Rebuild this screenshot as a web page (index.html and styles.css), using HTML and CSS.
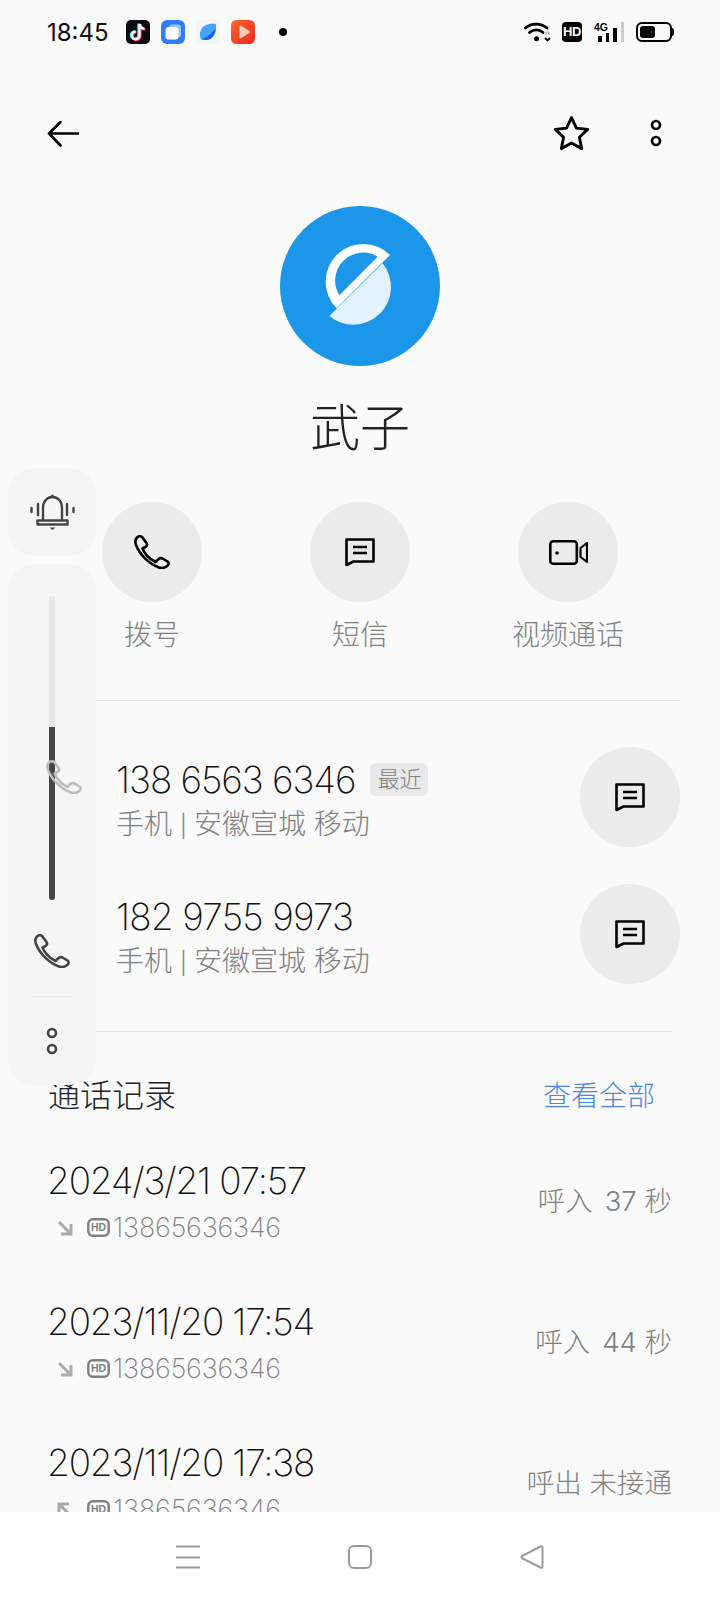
FILE: index.html
```html
<!DOCTYPE html>
<html lang="zh">
<head>
<meta charset="utf-8">
<title>武子</title>
<link rel="stylesheet" href="styles.css">
</head>
<body>
<div class="screen">
  <div class="main">
    <header class="status">
      <span class="time">18:45</span>
      <div class="apps">
        <svg class="app" viewBox="0 0 24 24"><rect width="24" height="24" rx="5" fill="#0a0a14"/><path d="M13.500 4v11.500a3.800 3.800 0 1 1-3.800-3.800M13.500 4c.4 2.900 2.200 4.600 5 4.900" fill="none" stroke="#25f4ee" stroke-width="2.800" transform="translate(-.8 -.4)"/><path d="M13.500 4v11.500a3.800 3.800 0 1 1-3.800-3.800M13.500 4c.4 2.900 2.200 4.600 5 4.900" fill="none" stroke="#fe2c55" stroke-width="2.800" transform="translate(.8 .5)"/><path d="M13.500 4v11.500a3.800 3.800 0 1 1-3.800-3.800M13.500 4c.4 2.900 2.200 4.600 5 4.900" fill="none" stroke="#fff" stroke-width="2.300"/></svg>
        <svg class="app" viewBox="0 0 24 24"><rect width="24" height="24" rx="6" fill="#2f7df6"/><rect x="8" y="4.500" width="12" height="13" rx="3" fill="#9cc4fb"/><rect x="4.500" y="7" width="13" height="12.500" rx="3" fill="#fff"/></svg>
        <svg class="app" viewBox="0 0 24 24"><rect width="24" height="24" rx="6" fill="#f3f4f6"/><path d="M5 19C3 17 3.500 9 8 6C12 3.500 17 3.500 20 4C20.500 9 19.500 14 16 17.500C13 20.500 8 20.500 5 19Z" fill="#45a5fb"/><path d="M5 19C10 18 15.500 14 19.500 8.500C20 12 18.500 15 16 17.500C13 20.500 8 20.500 5 19Z" fill="#1d62e6"/></svg>
        <svg class="app" viewBox="0 0 24 24"><defs><linearGradient id="rg" x1="0" y1="0" x2="1" y2="1"><stop offset="0" stop-color="#f8672e"/><stop offset="1" stop-color="#ee2a1c"/></linearGradient></defs><rect width="24" height="24" rx="5.500" fill="url(#rg)"/><path d="M8.500 6.500Q8.500 5 10 5.800L18.500 11Q19.500 12 18.500 13L10 18.200Q8.500 19 8.500 17.500Z" fill="#ffc9bb"/></svg>
        <span class="notif-dot"></span>
      </div>
      <div class="sys">
        <svg class="ic-wifi" viewBox="0 0 28 20"><g fill="none" stroke="#000" stroke-width="2.800" stroke-linecap="round"><path d="M1.500 6C7 .8 17 .8 23 6"/><path d="M5.500 10.500c4-3.500 9.500-3.500 13.500 0"/></g><circle cx="12.500" cy="16.800" r="2.500"/><path d="M21 12.500l2.500-2.500 2.500 2.500" fill="none" stroke="#bbb" stroke-width="1.800"/><path d="M21 16l2.500 2.500 2.500-2.500" fill="none" stroke="#000" stroke-width="1.800"/></svg>
        <span class="hd">HD</span>
        <div class="net">
          <span class="net-label">4G</span>
          <div class="bars"><i class="b1"></i><i class="b2"></i><i class="b3"></i><i class="b4"></i></div>
        </div>
        <div class="battery"><i class="level"></i></div>
        <i class="tip"></i>
      </div>
    </header>

    <nav class="toolbar">
      <svg class="ic-back" viewBox="0 0 32 26"><path d="M32 12.500H2M13.500 1L2 12.500 13.500 24.500" fill="none" stroke="#000" stroke-width="2.600" stroke-linecap="round" stroke-linejoin="round"/></svg>
      <div class="tool-right">
        <svg class="ic-star" viewBox="0 0 36 35"><path d="M18 2.500l4.800 10.200 11 1.300-8.100 7.600 2.200 11.100L18 27.200 8.100 32.700l2.200-11.100-8.100-7.600 11-1.300z" fill="none" stroke="#000" stroke-width="2.800" stroke-linejoin="round"/></svg>
        <svg class="ic-dots" viewBox="0 0 12 28"><circle cx="6" cy="6" r="4" fill="none" stroke="#000" stroke-width="2.600"/><circle cx="6" cy="22" r="4" fill="none" stroke="#000" stroke-width="2.600"/></svg>
      </div>
    </nav>

    <div class="avatar-wrap">
      <svg class="avatar" viewBox="60 48 480 480">
        <circle cx="300" cy="288" r="240" fill="#1c96e8"/>
        <path d="M390 195A113 113 0 0 0 230 355ZM353 200A84 84 0 0 0 238 316Z" fill="#fff" fill-rule="evenodd"/>
        <path d="M368 220A113 113 0 0 1 208 378Z" fill="#e1f2fe"/>
      </svg>
    </div>
    <h1 class="name">武子</h1>

    <section class="actions">
      <div class="action">
        <span class="circle"><svg class="ic-phone" viewBox="0 0 36 34"><use href="#phone"/></svg></span>
        <span class="action-label">拨号</span>
      </div>
      <div class="action">
        <span class="circle"><svg class="ic-msg" viewBox="0 0 30 29"><use href="#msg"/></svg></span>
        <span class="action-label">短信</span>
      </div>
      <div class="action">
        <span class="circle"><svg class="ic-video" viewBox="0 0 39 25"><rect x="1.300" y="1.300" width="26.500" height="22.400" rx="3" fill="none" stroke="#000" stroke-width="2.600"/><circle cx="8" cy="13" r="1.800"/><path d="M38 3L31.500 8V17L38 22Z" fill="none" stroke="#000" stroke-width="2.200" stroke-linejoin="round"/></svg></span>
        <span class="action-label">视频通话</span>
      </div>
    </section>

    <hr class="rule rule-a">

    <section class="phones">
      <div class="phone-row">
        <div class="phone-text">
          <div class="phone-line"><span class="number n1">138 6563 6346</span><span class="badge">最近</span></div>
          <div class="phone-sub">手机<span class="sep">|</span>安徽宣城 移动</div>
        </div>
        <span class="circle"><svg class="ic-msg" viewBox="0 0 30 29"><use href="#msg"/></svg></span>
      </div>
      <div class="phone-row">
        <div class="phone-text">
          <div class="phone-line"><span class="number n2">182 9755 9973</span></div>
          <div class="phone-sub">手机<span class="sep">|</span>安徽宣城 移动</div>
        </div>
        <span class="circle"><svg class="ic-msg" viewBox="0 0 30 29"><use href="#msg"/></svg></span>
      </div>
    </section>

    <hr class="rule rule-b">

    <div class="log-head">
      <span class="log-title">通话记录</span>
      <span class="log-all">查看全部</span>
    </div>

    <section class="logs">
      <div class="log">
        <div>
          <div class="log-date">2024/3/21 07:57</div>
          <div class="log-sub"><svg class="ic-dir" viewBox="0 0 16 16"><use href="#arrow-in"/></svg><svg class="ic-hd" viewBox="0 0 23 19"><use href="#hd"/><text x="11.500" y="13.200" class="hd-text">HD</text></svg><span class="log-num">13865636346</span></div>
        </div>
        <span class="log-kind">呼入<span class="kind-val">37 秒</span></span>
      </div>
      <div class="log">
        <div>
          <div class="log-date">2023/11/20 17:54</div>
          <div class="log-sub"><svg class="ic-dir" viewBox="0 0 16 16"><use href="#arrow-in"/></svg><svg class="ic-hd" viewBox="0 0 23 19"><use href="#hd"/><text x="11.500" y="13.200" class="hd-text">HD</text></svg><span class="log-num">13865636346</span></div>
        </div>
        <span class="log-kind">呼入<span class="kind-val">44 秒</span></span>
      </div>
      <div class="log">
        <div>
          <div class="log-date">2023/11/20 17:38</div>
          <div class="log-sub"><svg class="ic-dir" viewBox="0 0 16 16"><use href="#arrow-out"/></svg><svg class="ic-hd" viewBox="0 0 23 19"><use href="#hd"/><text x="11.500" y="13.200" class="hd-text">HD</text></svg><span class="log-num">13865636346</span></div>
        </div>
        <span class="log-kind">呼出 未接通</span>
      </div>
    </section>
  </div>

  <footer class="navbar">
    <svg class="nav-ic" viewBox="0 0 24 24"><path d="M0 1.500H24M0 12.500H24M0 22.500H24" stroke="#9a9a9a" stroke-width="2"/></svg>
    <svg class="nav-ic" viewBox="0 0 24 24"><rect x="1" y="1" width="22" height="22" rx="5" fill="none" stroke="#9a9a9a" stroke-width="2"/></svg>
    <svg class="nav-ic" viewBox="0 0 24 24"><path d="M22.500 2.500V21.500Q22.500 23.500 20.500 22.500L2 13.200Q1 12 2 11L20.500 1.500Q22.500 .8 22.500 2.500Z" fill="none" stroke="#9a9a9a" stroke-width="2"/></svg>
  </footer>

  <aside class="float">
    <div class="panel panel-bell">
      <svg class="ic-bell" viewBox="0 0 47 36"><g fill="none" stroke="#444" stroke-width="2.400" stroke-linejoin="round" stroke-linecap="round"><path d="M14 26V14C14 7.500 18 3 23.500 3S33 7.500 33 14V26"/><path d="M8.500 26.500H38.500V30.500H8.500Z"/><path d="M9 10V21M38 10V21"/><path d="M2.500 14V18M44.500 14V18"/></g><path d="M20.500 33.500h6l-3 2.500z" fill="#444"/><circle cx="23.500" cy="2" r="1.500" fill="#444"/></svg>
    </div>
    <div class="panel panel-vol">
      <div class="track"><div class="track-fill"></div></div>
      <svg class="ic-phone ghost" viewBox="0 0 36 34"><use href="#phone"/></svg>
      <svg class="ic-phone dark" viewBox="0 0 36 34"><use href="#phone"/></svg>
      <hr class="panel-rule">
      <svg class="ic-dots dark" viewBox="0 0 12 28"><circle cx="6" cy="6" r="4" fill="none" stroke="currentColor" stroke-width="2.600"/><circle cx="6" cy="22" r="4" fill="none" stroke="currentColor" stroke-width="2.600"/></svg>
    </div>
  </aside>

  <svg class="defs" aria-hidden="true">
    <defs>
      <path id="phone" d="M3 2.500C5 .8 7 1 8.500 2.500L12.500 8C13.500 9.500 13 11 11.500 12L8.500 13.500C10.500 18.500 15.500 24 21.500 27L24 24.500C25.500 23 27 22.800 28.500 23.500L33.500 26.500C35 27.500 35 29.500 33.500 30.800C31 33 28 33.500 25 32.500C15 29 6 20 2 10C1 7 1 4.500 3 2.500Z" fill="none" stroke="currentColor" stroke-width="2.600" stroke-linejoin="round"/>
      <g id="msg" fill="none" stroke="currentColor" stroke-width="2.600"><path d="M1.500 1.500H28.500V23.500H8.500L1.500 27Z" stroke-linejoin="round"/><path d="M8 9H22M8 15H22"/></g>
      <path id="arrow-in" d="M2 2L14 14M14 4V14H4" fill="none" stroke="#aaa" stroke-width="3"/>
      <path id="arrow-out" d="M14 14L2 2M2 12V2H12" fill="none" stroke="#aaa" stroke-width="3"/>
      <rect id="hd" x="1.300" y="1.300" width="20.400" height="16.400" rx="4.500" fill="none" stroke="#808080" stroke-width="2.400"/>
    </defs>
  </svg>
</div>
</body>
</html>
```
FILE: styles.css
```css
* { box-sizing: border-box; }
html, body { margin: 0; padding: 0; }
body {
  background: #fafafa;
  font-family: "Inter", "Noto Sans CJK SC", sans-serif;
  font-weight: 300;
}
.screen {
  width: 720px;
  height: 1600px;
  display: flex;
  flex-direction: column;
  position: relative;
  overflow: hidden;
  background: #fafafa;
}
.main { flex: 1; min-height: 0; overflow: hidden; }
.defs { position: absolute; width: 0; height: 0; }

/* status bar */
.status {
  height: 64px;
  padding: 0 46px 0 47px;
  display: flex;
  align-items: center;
}
.time { font-size: 24px; width: 79px; color: #111; font-weight: 400; }
.apps { display: flex; align-items: center; gap: 11px; }
.app { width: 24px; height: 24px; display: block; }
.notif-dot { width: 8px; height: 8px; border-radius: 50%; background: #000; margin-left: 13px; }
.sys { margin-left: auto; display: flex; align-items: center; }
.ic-wifi { width: 28px; height: 20px; }
.hd {
  width: 20px; height: 20px; margin-left: 10px;
  background: #000; color: #fff; border-radius: 4px;
  font: 700 13px/20px "Liberation Sans", sans-serif;
  text-align: center; letter-spacing: -.5px;
}
.net { position: relative; width: 30px; height: 20px; margin-left: 12px; }
.net-label {
  position: absolute; left: 0; top: 0;
  font: 700 10.500px/11px "Liberation Sans", sans-serif; color: #000;
}
.bars { position: absolute; left: 4px; bottom: 0; display: flex; align-items: flex-end; gap: 4px; }
.bars i { width: 3.500px; background: #000; display: block; }
.b1 { height: 6px; } .b2 { height: 9px; } .b3 { height: 14px; }
.bars .b4 { height: 20px; background: #ccc; }
.battery {
  width: 36px; height: 20px; margin-left: 12px;
  border: 2px solid #000; border-radius: 6px; padding: 2px;
}
.level { display: block; width: 15px; height: 12px; background: #000; border-radius: 3px; }
.tip { width: 2px; height: 8px; background: #000; border-radius: 0 2px 2px 0; }

/* toolbar */
.toolbar {
  height: 138px;
  padding: 0 0 0 47px;
  display: flex;
  align-items: center;
  justify-content: space-between;
}
.ic-back { width: 32px; height: 26px; margin-top: 2px; }
.tool-right { display: flex; align-items: center; gap: 60px; padding-right: 58px; }
.ic-star { width: 37px; height: 36px; }
.ic-dots { width: 12px; height: 28px; }

/* avatar & name */
.avatar-wrap { display: flex; justify-content: center; margin-top: 4px; }
.avatar { width: 160px; height: 160px; display: block; }
.name {
  margin: 32px 0 0;
  text-align: center;
  font-size: 50px;
  line-height: 60px;
  font-weight: 300;
  color: #222;
}

/* action buttons */
.actions {
  margin-top: 44px;
  padding: 0 48px;
  display: grid;
  grid-template-columns: repeat(3, 1fr);
}
.action { display: flex; flex-direction: column; align-items: center; gap: 13px; }
.circle {
  width: 100px; height: 100px;
  border-radius: 50%;
  background: #ebebeb;
  display: flex; align-items: center; justify-content: center;
  color: #000;
  flex: none;
}
.ic-phone { width: 36px; height: 34px; }
.ic-msg { width: 30px; height: 29px; }
.ic-video { width: 39px; height: 25px; }
.action-label { font-size: 28px; line-height: 40px; color: #808080; }

.rule { border: 0; height: 1px; background: #e3e3e3; margin: 0; }
.rule-a { margin: 45px 40px 0 48px; }
.rule-b { margin: 47px 48px 0 48px; }

/* phone rows */
.phones {
  padding: 46px 40px 0 116px;
  display: flex;
  flex-direction: column;
  gap: 37px;
}
.phone-row { display: flex; align-items: center; justify-content: space-between; }
.phone-text { margin-top: 8px; }
.phone-line { display: flex; align-items: center; height: 48px; }
.number { font-size: 37px; font-weight: 250; color: #111; }
.n1 { letter-spacing: -1.080px; }
.n2 { letter-spacing: -.830px; }
.badge {
  margin-left: 15px;
  width: 58px; height: 33px;
  background: #e8e8e8;
  border-radius: 6px;
  font-size: 22px; line-height: 33px;
  text-align: center;
  color: #808080;
}
.phone-sub { font-size: 28px; line-height: 42px; color: #808080; }
.sep { font-size: 22px; margin: 0 7px 0 8px; }

/* call log */
.log-head {
  padding: 44px 65px 15px 48px;
  display: flex;
  align-items: center;
  justify-content: space-between;
}
.log-title { font-size: 32px; line-height: 40px; color: #222; }
.log-all { font-size: 28px; line-height: 40px; color: #4a86e0; }
.log {
  height: 141px;
  padding: 0 48px 0 47px;
  display: flex;
  align-items: center;
  justify-content: space-between;
}
.log-date { font-size: 37px; font-weight: 250; line-height: 50px; letter-spacing: -1.200px; color: #111; }
.log-sub { display: flex; align-items: center; height: 40px; margin-top: 2px; color: #808080; }
.ic-dir { width: 16px; height: 16px; margin-left: 10px; }
.ic-hd { width: 23px; height: 19px; margin-left: 14px; }
.hd-text { font: 700 10.500px "Liberation Sans", sans-serif; fill: #808080; text-anchor: middle; }
.log-num { font-size: 27px; font-weight: 250; margin-left: 3px; letter-spacing: -.170px; }
.log-kind { font-size: 27.500px; color: #808080; margin-bottom: 6px; }
.kind-val { margin-left: 12px; }

/* nav bar */
.navbar {
  height: 88px;
  flex: none;
  background: #fff;
  display: grid;
  grid-template-columns: repeat(3, 172px);
  justify-content: center;
  justify-items: center;
  padding-top: 33px;
}
.nav-ic { width: 24px; height: 24px; }

/* floating panels */
.float {
  position: absolute;
  left: 8px;
  top: 468px;
  width: 88px;
  display: flex;
  flex-direction: column;
  gap: 8px;
}
.panel { background: #f5f5f5; border-radius: 26px; }
.panel-bell { height: 88px; display: flex; align-items: center; justify-content: center; }
.ic-bell { width: 47px; height: 36px; }
.panel-vol {
  height: 521px;
  position: relative;
  display: flex;
  flex-direction: column;
  align-items: center;
  padding-top: 32px;
}
.track { width: 6px; height: 304px; background: #e6e6e6; border-radius: 3px; overflow: hidden; padding-top: 131px; }
.track-fill { height: 173px; background: #444; }
.ghost { position: absolute; left: 38px; top: 196px; color: #bbb; }
.dark { color: #444; }
.panel-vol .ic-phone.dark { margin-top: 34px; }
.panel-rule { width: 40px; border: 0; height: 1px; background: #ececec; margin: 28px 0 30px; }
```
